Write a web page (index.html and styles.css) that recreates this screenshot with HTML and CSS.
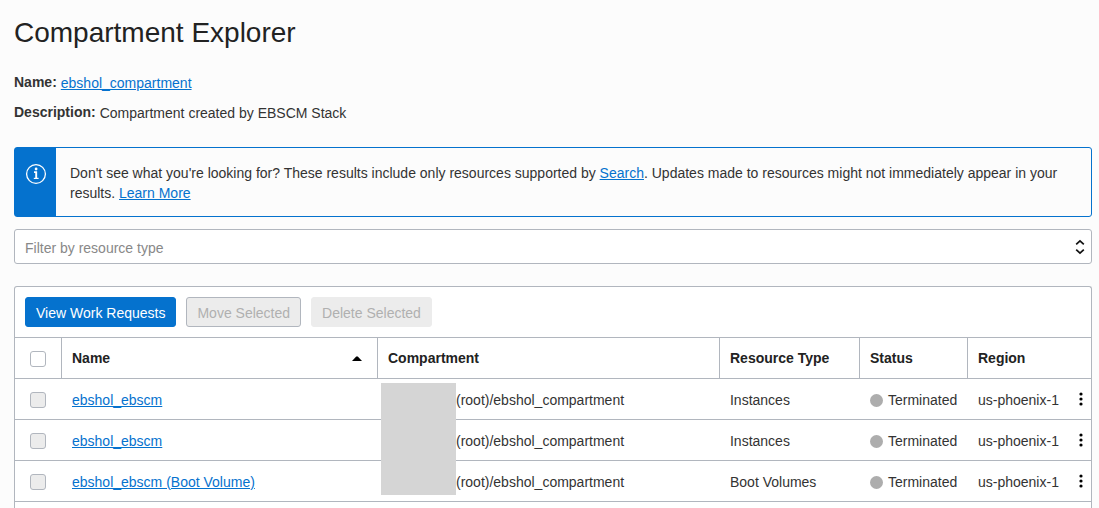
FILE: index.html
```html
<!DOCTYPE html>
<html lang="en">
<head>
<meta charset="utf-8">
<title>Compartment Explorer</title>
<link rel="stylesheet" href="styles.css">
</head>
<body>
<svg class="sprite" aria-hidden="true">
  <symbol id="dots" viewBox="0 0 4 14"><circle cx="2" cy="2" r="1.6"/><circle cx="2" cy="7" r="1.6"/><circle cx="2" cy="12" r="1.6"/></symbol>
</svg>
<main class="page">
  <h1 class="title">Compartment Explorer</h1>
  <dl class="details">
    <div class="detail"><dt>Name:</dt><dd><a href="#">ebshol_compartment</a></dd></div>
    <div class="detail"><dt>Description:</dt><dd>Compartment created by EBSCM Stack</dd></div>
  </dl>

  <div class="notice">
    <div class="notice-icon">
      <svg width="22" height="22" viewBox="0 0 22 22" fill="none" stroke="#fff" aria-hidden="true">
        <circle cx="11" cy="11" r="9.4" stroke-width="1.3"/>
        <path d="M9 9.1h2.2v6.4" stroke-width="1.9"/>
        <path d="M8.8 15.4h4.8" stroke-width="1.2"/>
        <circle cx="11.1" cy="6" r="1.4" fill="#fff" stroke="none"/>
      </svg>
    </div>
    <p class="notice-text">Don't see what you're looking for? These results include only resources supported by <a href="#">Search</a>. Updates made to resources might not immediately appear in your results. <a href="#">Learn More</a></p>
  </div>

  <div class="filter">
    <select class="filter-select" aria-label="Filter by resource type">
      <option>Filter by resource type</option>
    </select>
    <svg class="filter-arrows" width="10" height="16" viewBox="0 0 10 16" fill="none" stroke="#111" stroke-width="1.7" aria-hidden="true"><path d="M1.2 5.4 5 1.8l3.8 3.6M1.2 10.6 5 14.2l3.8-3.6"/></svg>
  </div>

  <section class="card">
    <div class="toolbar">
      <button class="btn btn-primary" type="button">View Work Requests</button>
      <button class="btn btn-outline" type="button" disabled>Move Selected</button>
      <button class="btn" type="button" disabled>Delete Selected</button>
    </div>
    <table class="grid">
      <colgroup><col class="col-check"><col class="col-name"><col><col class="col-type"><col class="col-status"><col class="col-region"><col class="col-menu"></colgroup>
      <thead>
        <tr>
          <th class="check"><input class="box" type="checkbox" aria-label="Select all"></th>
          <th><div class="sortable">Name<svg width="10" height="5" viewBox="0 0 10 5" aria-hidden="true"><path d="M0 5 4.2.4h1.6L10 5z"/></svg></div></th>
          <th>Compartment</th>
          <th>Resource Type</th>
          <th>Status</th>
          <th colspan="2">Region</th>
        </tr>
      </thead>
      <tbody>
        <tr>
          <td class="check"><input class="box" type="checkbox" aria-label="Select row 1" disabled></td>
          <td><a href="#">ebshol_ebscm</a></td>
          <td class="path"><span class="mask"></span>(root)/ebshol_compartment</td>
          <td>Instances</td>
          <td><span class="status">Terminated</span></td>
          <td>us-phoenix-1</td>
          <td class="menu"><button class="more" type="button" aria-label="Actions"><svg width="4" height="14"><use href="#dots"/></svg></button></td>
        </tr>
        <tr>
          <td class="check"><input class="box" type="checkbox" aria-label="Select row 2" disabled></td>
          <td><a href="#">ebshol_ebscm</a></td>
          <td class="path">(root)/ebshol_compartment</td>
          <td>Instances</td>
          <td><span class="status">Terminated</span></td>
          <td>us-phoenix-1</td>
          <td class="menu"><button class="more" type="button" aria-label="Actions"><svg width="4" height="14"><use href="#dots"/></svg></button></td>
        </tr>
        <tr>
          <td class="check"><input class="box" type="checkbox" aria-label="Select row 3" disabled></td>
          <td><a href="#">ebshol_ebscm (Boot Volume)</a></td>
          <td class="path">(root)/ebshol_compartment</td>
          <td>Boot Volumes</td>
          <td><span class="status">Terminated</span></td>
          <td>us-phoenix-1</td>
          <td class="menu"><button class="more" type="button" aria-label="Actions"><svg width="4" height="14"><use href="#dots"/></svg></button></td>
        </tr>
      </tbody>
    </table>
  </section>
</main>
</body>
</html>
```
FILE: styles.css
```css
* { box-sizing: border-box; }

body {
  margin: 0;
  background: #fcfcfc;
  color: #333;
  font: 14px/20px "Liberation Sans", Arial, sans-serif;
}

a { color: #0572ce; }

.sprite { display: none; }

.page {
  display: flex;
  flex-direction: column;
  min-height: 100vh;
  padding: 15px 7px 0 14px;
}

.title {
  margin: 0;
  color: #222;
  font-size: 28px;
  font-weight: 400;
  line-height: 36px;
}

.details {
  display: flex;
  flex-direction: column;
  gap: 9px;
  margin: 21px 0 24px;
}

.detail { display: flex; gap: 4px; }
.detail dt { font-weight: 700; }
.detail dd { margin: 0; padding-top: 1px; }

.notice {
  display: flex;
  border: 1px solid #0572ce;
  border-radius: 3px;
}

.notice-icon {
  flex: none;
  width: 41px;
  padding: 15px 0 0 10px;
  background: #0572ce;
}

.notice-icon svg { display: block; }
.notice-text { margin: 0; padding: 15px 14px 13px; }

.filter {
  position: relative;
  margin: 12px 0 22px;
}

.filter-select {
  display: block;
  width: 100%;
  height: 35px;
  padding: 2px 30px 0 10px;
  border: 1px solid #b1b6be;
  border-radius: 3px;
  background: #fff;
  color: #888;
  font: inherit;
  appearance: none;
}

.filter-arrows {
  position: absolute;
  top: 10px;
  right: 7px;
  pointer-events: none;
}

.card {
  flex: 1;
  border: 1px solid #b1b6be;
  border-bottom: 0;
  border-radius: 3px 3px 0 0;
  background: #fff;
}

.toolbar {
  display: flex;
  gap: 10px;
  padding: 10px;
}

.btn {
  height: 30px;
  padding: 2px 10px 0;
  border: 1px solid #ececec;
  border-radius: 3px;
  background: #ececec;
  color: #b0b0b0;
  font: inherit;
}

.btn-primary { border-color: #0572ce; background: #0572ce; color: #fff; }
.btn-outline { border-color: #b1b6be; }

.grid {
  width: 100%;
  border-collapse: separate;
  border-spacing: 0;
  table-layout: fixed;
  border-top: 1px solid #b1b6be;
}

.col-check { width: 47px; }
.col-name { width: 316px; }
.col-type { width: 140px; }
.col-status { width: 108px; }
.col-region { width: 98px; }
.col-menu { width: 25px; }

.grid th,
.grid td {
  height: 41px;
  padding: 0 10px;
  border-bottom: 1px solid #b1b6be;
  text-align: left;
  white-space: nowrap;
}

.grid td { padding-top: 2px; }

.grid th {
  border-right: 1px solid #b1b6be;
  color: #222;
}

.grid th:last-child { border-right: 0; }
.grid .check { padding: 2px 0 0 15px; }

.box {
  display: block;
  width: 16px;
  height: 16px;
  margin: 0;
  border: 1px solid #b1b6be;
  border-radius: 3px;
  background: #fff;
  appearance: none;
}

.box:disabled { background: #ececec; }

.sortable {
  display: flex;
  align-items: center;
  justify-content: space-between;
  padding-right: 5px;
}

.grid .path { position: relative; padding-left: 78px; }

/* Covers the tenancy name across all three rows. */
.mask {
  position: absolute;
  top: 4px;
  left: 3px;
  width: 75px;
  height: 112px;
  background: #d5d5d5;
  z-index: 1;
}

.status { display: flex; align-items: center; gap: 5px; }

.status::before {
  content: "";
  width: 13px;
  height: 13px;
  border-radius: 50%;
  background: #adadad;
}

.grid .menu { padding: 0 8px 0 0; }

.more {
  display: block;
  margin-left: auto;
  padding: 0;
  border: 0;
  background: none;
}

.more svg { display: block; }
```
